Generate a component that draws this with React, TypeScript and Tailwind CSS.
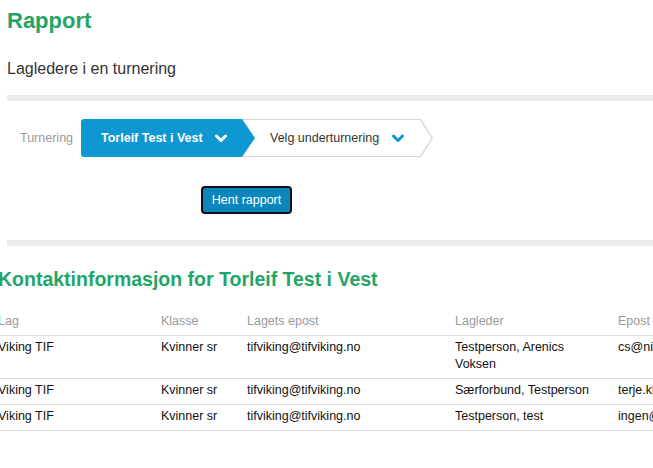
import React from 'react';

const rows = [
  { lag: 'Viking TIF', klasse: 'Kvinner sr', lagEpost: 'tifviking@tifviking.no', lagleder: 'Testperson, Arenics Voksen', epost: 'cs@nif.idrett.no' },
  { lag: 'Viking TIF', klasse: 'Kvinner sr', lagEpost: 'tifviking@tifviking.no', lagleder: 'Særforbund, Testperson', epost: 'terje.klausen@test.no' },
  { lag: 'Viking TIF', klasse: 'Kvinner sr', lagEpost: 'tifviking@tifviking.no', lagleder: 'Testperson, test', epost: 'ingen@epost.no' },
];

const Chevron = ({ className }: { className: string }) => (
  <svg width="12" height="9" viewBox="0 0 12 9" className={className}>
    <path d="M1.5 2 L6 6.5 L10.5 2" fill="none" stroke="currentColor" strokeWidth="3" strokeLinecap="round" strokeLinejoin="round" />
  </svg>
);

const App = () => {
  return (
    <div className="w-[653px] h-[468px] overflow-hidden bg-white font-['Liberation_Sans',Arial,sans-serif]">
      {/* Header */}
      <div className="pl-[7px]">
        <h1 className="pt-[8px] text-[22px] leading-[25px] font-bold text-[#22a566]">Rapport</h1>
        <p className="mt-[27px] text-[16px] leading-[18px] text-[#333]">Lagledere i en turnering</p>
        <div className="mt-[17px] h-[6px] w-[700px] bg-[#ebebeb]" />

        {/* Breadcrumb selector */}
        <div className="mt-[18px] flex items-center h-[38px]">
          <span className="ml-[13px] w-[61px] text-[12.5px] text-[#999]">Turnering</span>
          <div className="relative z-10 flex items-center h-[38px] w-[174px] pl-[20px] rounded-l-[3px] bg-[#0e97d1] text-white text-[12.5px] font-bold [clip-path:polygon(0_0,calc(100%_-_13px)_0,100%_50%,calc(100%_-_13px)_100%,0_100%)]">
            <span>Torleif Test i Vest</span>
            <Chevron className="ml-[12px] text-white" />
          </div>
          <div className="relative -ml-[13px] h-[38px] w-[191px] bg-[#d6d6d6] [clip-path:polygon(0_0,calc(100%_-_12px)_0,100%_50%,calc(100%_-_12px)_100%,0_100%)]">
            <div className="absolute top-px bottom-px left-0 right-[1.5px] flex items-center pl-[28px] bg-white text-[12.5px] text-[#333] [clip-path:polygon(0_0,calc(100%_-_11.5px)_0,100%_50%,calc(100%_-_11.5px)_100%,0_100%)]">
              <span>Velg underturnering</span>
              <Chevron className="ml-[13px] text-[#0e97d1]" />
            </div>
          </div>
        </div>

        <button className="mt-[29px] ml-[194px] h-[28px] w-[91px] rounded-[4px] border-2 border-[#111] bg-[#0b87bd] text-[12.5px] text-white">
          Hent rapport
        </button>

        <div className="mt-[26px] h-[6px] w-[700px] bg-[#ebebeb]" />
      </div>

      {/* Contact info */}
      <div className="-ml-[2px] mt-[22px]">
        <h2 className="text-[19.5px] leading-[22px] font-bold text-[#22a566]">Kontaktinformasjon for Torleif Test i Vest</h2>
        <table className="mt-[20px] table-fixed w-[760px] border-collapse text-[12.5px] leading-[17px] text-left">
          <colgroup>
            <col className="w-[163px]" />
            <col className="w-[86px]" />
            <col className="w-[208px]" />
            <col className="w-[163px]" />
            <col className="w-[140px]" />
          </colgroup>
          <thead>
            <tr className="border-b border-[#ddd] text-[#999]">
              <th className="pt-[3px] pb-[5px] pr-[10px] font-normal">Lag</th>
              <th className="pt-[3px] pb-[5px] pr-[10px] font-normal">Klasse</th>
              <th className="pt-[3px] pb-[5px] pr-[10px] font-normal">Lagets epost</th>
              <th className="pt-[3px] pb-[5px] pr-[10px] font-normal">Lagleder</th>
              <th className="pt-[3px] pb-[5px] pr-[10px] font-normal">Epost</th>
            </tr>
          </thead>
          <tbody className="text-[#111]">
            {rows.map((r, i) => (
              <tr key={i} className="border-b border-[#ddd] align-top">
                <td className="pt-[3px] pb-[5px] pr-[10px]">{r.lag}</td>
                <td className="pt-[3px] pb-[5px] pr-[10px]">{r.klasse}</td>
                <td className="pt-[3px] pb-[5px] pr-[10px]">{r.lagEpost}</td>
                <td className="pt-[3px] pb-[5px] pr-[10px]">{r.lagleder}</td>
                <td className="pt-[3px] pb-[5px] pr-[10px]">{r.epost}</td>
              </tr>
            ))}
          </tbody>
        </table>
      </div>
    </div>
  );
};

export default App;
